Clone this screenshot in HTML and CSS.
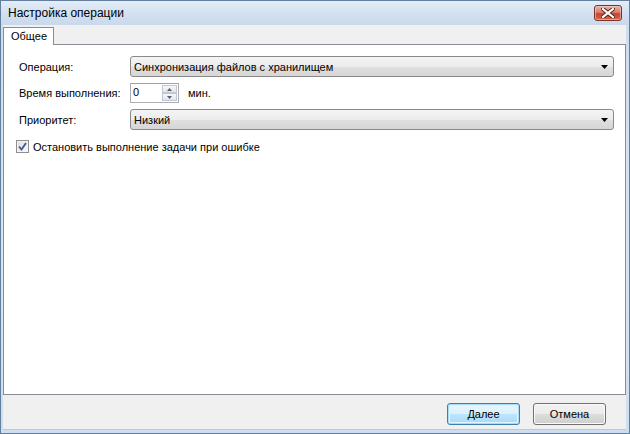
FILE: index.html
```html
<!DOCTYPE html>
<html>
<head>
	<meta charset="utf-8">
	<title>Настройка операции</title>
	<link rel="stylesheet" href="styles.css">
</head>
<body>
	<div class="window">
		<div class="titlebar">
			<span class="title">Настройка операции</span>
			<span class="close">
				<svg width="14" height="10" viewBox="0 0 14 10">
					<path d="M2 1 L12 9 M12 1 L2 9" stroke="#5a2018" stroke-width="4" stroke-linecap="square"/>
					<path d="M2 1 L12 9 M12 1 L2 9" stroke="#fff" stroke-width="2.2" stroke-linecap="square"/>
				</svg>
			</span>
		</div>
		<div class="client">
			<div class="tabs">
				<div class="tab">Общее</div>
				<div class="tab-rest"></div>
			</div>
			<div class="page">
				<div class="row">
					<span class="caption">Операция:</span>
					<div class="combo">
						<span class="combo-text">Синхронизация файлов с хранилищем</span>
						<svg class="arrow" width="7" height="4" viewBox="0 0 7 4"><path d="M0 0 H7 L3.5 4 Z" fill="#000"/></svg>
					</div>
				</div>
				<div class="row row-spin">
					<span class="caption">Время выполнения:</span>
					<div class="spin">
						<span class="spin-text">0</span>
						<div class="spin-btns">
							<span class="spin-btn"><svg width="5" height="3" viewBox="0 0 5 3"><path d="M0 3 H5 L2.5 0 Z" fill="#4d6185"/></svg></span>
							<span class="spin-btn"><svg width="5" height="3" viewBox="0 0 5 3"><path d="M0 0 H5 L2.5 3 Z" fill="#4d6185"/></svg></span>
						</div>
					</div>
					<span class="unit">мин.</span>
				</div>
				<div class="row">
					<span class="caption">Приоритет:</span>
					<div class="combo">
						<span class="combo-text">Низкий</span>
						<svg class="arrow" width="7" height="4" viewBox="0 0 7 4"><path d="M0 0 H7 L3.5 4 Z" fill="#000"/></svg>
					</div>
				</div>
				<div class="check-row">
					<span class="checkbox">
						<svg width="9" height="9" viewBox="0 0 9 9"><path d="M1 4.5 L3.5 7.5 L8 1" fill="none" stroke="#3b5a9a" stroke-width="1.8"/></svg>
					</span>
					<span>Остановить выполнение задачи при ошибке</span>
				</div>
			</div>
			<div class="buttons">
				<button class="btn btn-default">Далее</button>
				<button class="btn">Отмена</button>
			</div>
		</div>
	</div>
</body>
</html>
```

FILE: styles.css
```css
*{
    margin: 0;
    padding: 0;
    box-sizing: border-box;
}
html,body{
    width: 630px;
    height: 434px;
    overflow: hidden;
}
body{
    font: 11px "Liberation Sans", Arial, sans-serif;
    color: #000;
    background: #fff;
}

/* окно */
.window{
    width: 630px;
    height: 434px;
    display: flex;
    flex-direction: column;
    border: 1px solid #62809e;
    background: linear-gradient(#cddcee, #d9e5f2 60%, #cfdeee);
}
.titlebar{
    height: 24px;
    display: flex;
    align-items: flex-start;
    background: linear-gradient(#e4edf8, #d3e1f1 50%, #c9d9ec);
}
.title{
    flex: 1;
    padding: 5px 0 0 7px;
    font-size: 12px;
    color: #000;
}
.close{
    width: 28px;
    height: 16px;
    margin: 4px 7px 0 0;
    display: flex;
    align-items: center;
    justify-content: center;
    border: 1px solid #7b3327;
    border-radius: 3px;
    background: linear-gradient(#eab1a6, #d88172 45%, #c5452f 55%, #d36a4e);
    box-shadow: inset 0 0 0 1px rgba(255,220,210,.5);
}

/* клиентская область */
.client{
    flex: 1;
    margin: 0 3px 3px 2px;
    display: flex;
    flex-direction: column;
    background: #f0f0f0;
    border-bottom: 1px solid #b9cbd9;
}
.tabs{
    display: flex;
    margin-top: 2px;
    height: 18px;
}
.tab{
    width: 51px;
    height: 18px;
    padding: 2px 0 0 7px;
    background: #fff;
    border: 1px solid #898c95;
    border-bottom: none;
    position: relative;
    z-index: 1;
}
.tab-rest{
    flex: 1;
    border-bottom: 1px solid #898c95;
}
.page{
    height: 350px;
    background: #fff;
    border: 1px solid #898c95;
    border-top: none;
    padding: 11px 11px 0 12px;
}
.row{
    display: flex;
    align-items: center;
    height: 21px;
    margin-bottom: 6px;
}
.row-spin{
    height: 20px;
}
.caption{
    width: 114px;
    padding-left: 3px;
    flex: none;
}
.combo{
    flex: 1;
    height: 21px;
    display: flex;
    align-items: center;
    padding: 0 5px 0 3px;
    border: 1px solid #8a8a8a;
    border-radius: 3px;
    background: linear-gradient(#f4f4f4, #ececec 50%, #e0e0e0 51%, #d6d6d6);
}
.combo-text{
    flex: 1;
}
.arrow{
    flex: none;
}
.spin{
    width: 49px;
    height: 20px;
    display: flex;
    border: 1px solid #abadb3;
    border-top-color: #9ea1a8;
    background: #fff;
}
.spin-text{
    flex: 1;
    padding: 2px 0 0 2px;
}
.spin-btns{
    width: 16px;
    display: flex;
    flex-direction: column;
    padding: 1px 1px 1px 0;
}
.spin-btn{
    flex: 1;
    display: flex;
    align-items: center;
    justify-content: center;
    border: 1px solid #c3c7cf;
    background: linear-gradient(#f6f7f9, #e3e6ea);
}
.unit{
    margin-left: 9px;
}
.check-row{
    display: flex;
    align-items: center;
    margin-top: 10px;
}
.checkbox{
    width: 13px;
    height: 13px;
    margin-right: 4px;
    display: flex;
    align-items: center;
    justify-content: center;
    border: 1px solid #8f8f8f;
    background: linear-gradient(135deg, #dcdcdc, #fbfbfb);
    box-shadow: inset 0 0 0 1px #f4f4f4;
}

/* кнопки */
.buttons{
    height: 34px;
    display: flex;
    justify-content: flex-end;
    gap: 13px;
    padding: 8px 20px 0 0;
}
.btn{
    width: 73px;
    height: 22px;
    font: 11px "Liberation Sans", Arial, sans-serif;
    color: #000;
    border: 1px solid #707070;
    border-radius: 3px;
    background: linear-gradient(#f2f2f2, #ebebeb 50%, #dddddd 51%, #cfcfcf);
    box-shadow: inset 0 0 0 1px #fafafa;
}
.btn-default{
    border-color: #3c7fb1;
    box-shadow: inset 0 0 0 1px #a8dbf8, inset 0 0 0 2px #e2f3fc;
    background: linear-gradient(#eaf6fd, #d9f0fc 50%, #bee6fd 51%, #a7d9f5);
}
```
